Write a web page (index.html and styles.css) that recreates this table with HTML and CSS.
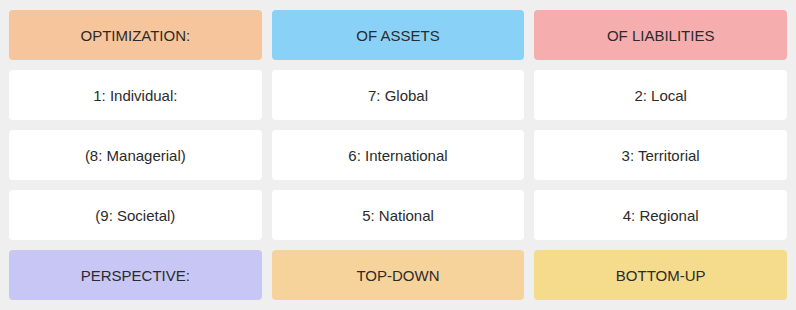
FILE: index.html
```html
<!DOCTYPE html>
<html>
<head>
<meta charset="utf-8">
<link rel="stylesheet" href="styles.css">
</head>
<body>
<div class="grid">
  <div class="cell c-orange">OPTIMIZATION:</div>
  <div class="cell c-blue">OF ASSETS</div>
  <div class="cell c-pink">OF LIABILITIES</div>
  <div class="cell">1: Individual:</div>
  <div class="cell">7: Global</div>
  <div class="cell">2: Local</div>
  <div class="cell">(8: Managerial)</div>
  <div class="cell">6: International</div>
  <div class="cell">3: Territorial</div>
  <div class="cell">(9: Societal)</div>
  <div class="cell">5: National</div>
  <div class="cell">4: Regional</div>
  <div class="cell c-purple">PERSPECTIVE:</div>
  <div class="cell c-peach">TOP-DOWN</div>
  <div class="cell c-yellow">BOTTOM-UP</div>
</div>
</body>
</html>
```
FILE: styles.css
```css
html, body {
  margin: 0;
  padding: 0;
  background: #efefef;
}
.grid {
  display: grid;
  grid-template-columns: repeat(3, 1fr);
  grid-auto-rows: 50px;
  gap: 10px;
  padding: 10px 9px;
  font-family: "Liberation Sans", Arial, sans-serif;
  font-size: 15px;
  color: #2b2b2b;
}
.cell {
  background: #fff;
  border-radius: 4px;
  display: flex;
  align-items: center;
  justify-content: center;
}
.c-orange { background: #f7c59b; }
.c-blue { background: #89d1f6; }
.c-pink { background: #f5adae; }
.c-purple { background: #c7c6f4; }
.c-peach { background: #f6d39b; }
.c-yellow { background: #f5dc8d; }
```
